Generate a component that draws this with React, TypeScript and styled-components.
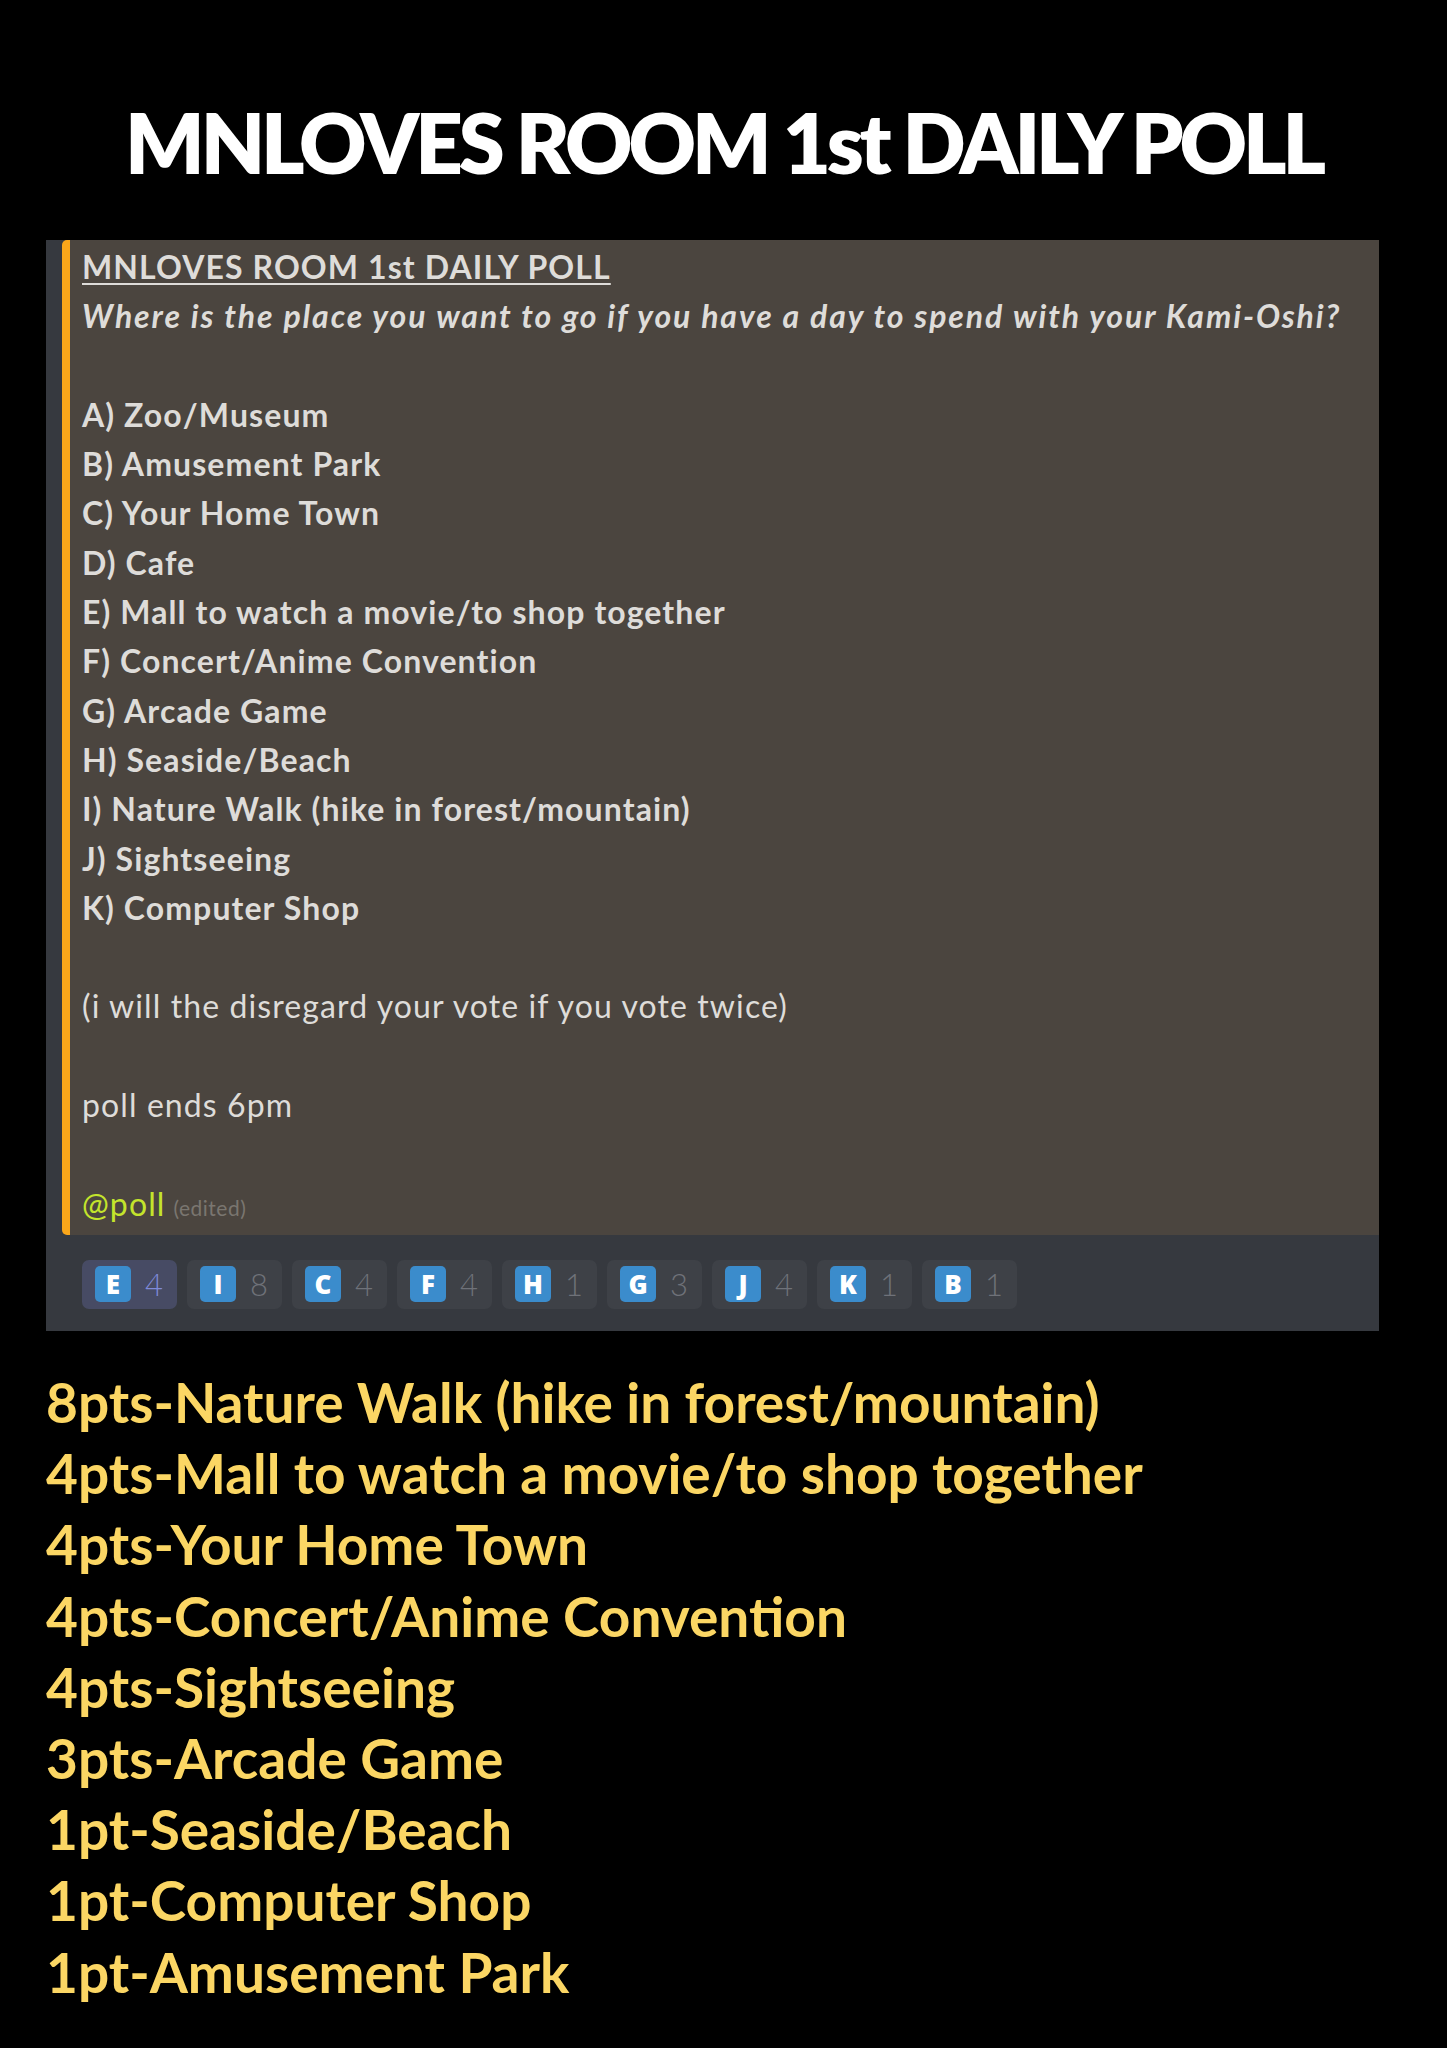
import React from "react"
import styled, { createGlobalStyle } from "styled-components"

const GlobalStyle = createGlobalStyle`
  html, body {
    margin: 0;
    padding: 0;
    background: #000;
  }
  body {
    width: 1447px;
    min-height: 2048px;
    font-family: "Lato", "Noto Sans", sans-serif;
  }
`

const Page = styled.div`
  width: 1447px;
  min-height: 2048px;
  background: #000;
  padding-top: 92px;
  box-sizing: border-box;
`

const PageTitle = styled.h1`
  margin: 0;
  text-align: center;
  color: #fff;
  font-family: "Lato", sans-serif;
  font-weight: 800;
  font-size: 83px;
  line-height: 100px;
  letter-spacing: -4.1px;
`

const Card = styled.div`
  margin: 48px 0 0 46px;
  width: 1333px;
  background: #36393f;
  display: flex;
  flex-direction: column;
`

const MessageRow = styled.div`
  display: flex;
  padding-left: 16px;
`

const Embed = styled.div`
  flex: 1;
  background: #4b453f;
  border-left: 8px solid #faa61a;
  border-radius: 5px 0 0 5px;
  padding: 2px 0 3px 12px;
  color: #dedcd9;
  font-family: "Lato", sans-serif;
  font-size: 32px;
  line-height: 49.3px;
  letter-spacing: 1.1px;
`

const Line = styled.div<{ $weight?: number; $italic?: boolean }>`
  font-weight: ${p => p.$weight ?? 400};
  font-style: ${p => (p.$italic ? "italic" : "normal")};
  letter-spacing: ${p => (p.$italic ? "1.9px" : "inherit")};
  min-height: 49.3px;
  white-space: nowrap;
`

const Heading = styled(Line)`
  text-decoration: underline;
  text-underline-offset: 4px;
  text-decoration-thickness: 2px;
`

const Mention = styled.span`
  color: #c4e42c;
`

const Edited = styled.span`
  color: #7a7670;
  font-size: 21px;
  letter-spacing: 0.5px;
  margin-left: 8px;
`

const Reactions = styled.div`
  display: flex;
  gap: 10px;
  padding: 25px 0 22px 36px;
`

const Pill = styled.div<{ $active?: boolean }>`
  width: 95px;
  height: 49px;
  box-sizing: border-box;
  border-radius: 7px;
  background: ${p => (p.$active ? "#474b64" : "#3e4147")};
  display: flex;
  align-items: center;
  padding-left: 13px;
  gap: 14px;
`

const Emoji = styled.span`
  width: 36px;
  height: 36px;
  border-radius: 5px;
  background: #3b8ccc;
  color: #fff;
  display: flex;
  align-items: center;
  justify-content: center;
  font-family: "Open Sans", sans-serif;
  font-weight: 800;
  font-size: 26px;
`

const Count = styled.span<{ $active?: boolean }>`
  color: ${p => (p.$active ? "#7f8ad8" : "#6f7279")};
  font-family: "Lato", sans-serif;
  font-weight: 300;
  font-size: 31px;
`

const Results = styled.div`
  margin: 36px 0 0 46px;
  color: #fbd664;
  font-family: "Lato", sans-serif;
  font-weight: 700;
  font-size: 55px;
  line-height: 71.2px;
`

const options = [
  "A) Zoo/Museum",
  "B) Amusement Park",
  "C) Your Home Town",
  "D) Cafe",
  "E) Mall to watch a movie/to shop together",
  "F) Concert/Anime Convention",
  "G) Arcade Game",
  "H) Seaside/Beach",
  "I) Nature Walk (hike in forest/mountain)",
  "J) Sightseeing",
  "K) Computer Shop",
]

const reactions = [
  { letter: "E", count: 4, active: true },
  { letter: "I", count: 8 },
  { letter: "C", count: 4 },
  { letter: "F", count: 4 },
  { letter: "H", count: 1 },
  { letter: "G", count: 3 },
  { letter: "J", count: 4 },
  { letter: "K", count: 1 },
  { letter: "B", count: 1 },
]

const results = [
  "8pts-Nature Walk (hike in forest/mountain)",
  "4pts-Mall to watch a movie/to shop together",
  "4pts-Your Home Town",
  "4pts-Concert/Anime Convention",
  "4pts-Sightseeing",
  "3pts-Arcade Game",
  "1pt-Seaside/Beach",
  "1pt-Computer Shop",
  "1pt-Amusement Park",
]

const App = () => {
  return (
    <>
      <GlobalStyle />
      <Page>
        <PageTitle>MNLOVES ROOM 1st DAILY POLL</PageTitle>
        <Card>
          <MessageRow>
            <Embed>
              <Heading $weight={700}>MNLOVES ROOM 1st DAILY POLL</Heading>
              <Line $weight={700} $italic>
                Where is the place you want to go if you have a day to spend with your Kami-Oshi?
              </Line>
              <Line />
              {options.map(item => (
                <Line key={item} $weight={700}>{item}</Line>
              ))}
              <Line />
              <Line>(i will the disregard your vote if you vote twice)</Line>
              <Line />
              <Line>poll ends 6pm</Line>
              <Line />
              <Line>
                <Mention>@poll</Mention>
                <Edited>(edited)</Edited>
              </Line>
            </Embed>
          </MessageRow>
          <Reactions>
            {reactions.map(r => (
              <Pill key={r.letter} $active={r.active}>
                <Emoji>{r.letter}</Emoji>
                <Count $active={r.active}>{r.count}</Count>
              </Pill>
            ))}
          </Reactions>
        </Card>
        <Results>
          {results.map(r => (
            <div key={r}>{r}</div>
          ))}
        </Results>
      </Page>
    </>
  )
}

export default App
